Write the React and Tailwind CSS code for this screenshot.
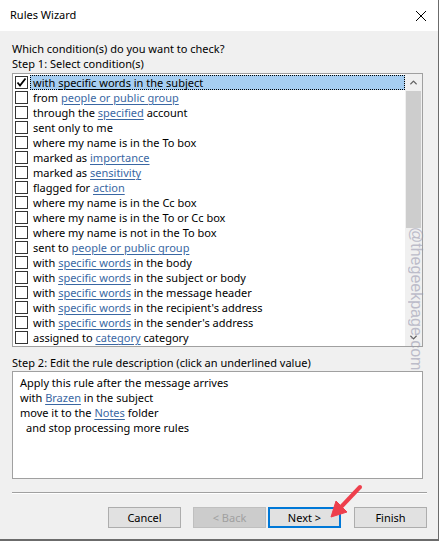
import { ChevronUp, ChevronDown } from 'lucide-react';

const conditions = [
  ['with ', { link: 'specific words' }, ' in the subject'],
  ['from ', { link: 'people or public group' }],
  ['through the ', { link: 'specified' }, ' account'],
  ['sent only to me'],
  ['where my name is in the To box'],
  ['marked as ', { link: 'importance' }],
  ['marked as ', { link: 'sensitivity' }],
  ['flagged for ', { link: 'action' }],
  ['where my name is in the Cc box'],
  ['where my name is in the To or Cc box'],
  ['where my name is not in the To box'],
  ['sent to ', { link: 'people or public group' }],
  ['with ', { link: 'specific words' }, ' in the body'],
  ['with ', { link: 'specific words' }, ' in the subject or body'],
  ['with ', { link: 'specific words' }, ' in the message header'],
  ['with ', { link: 'specific words' }, " in the recipient's address"],
  ['with ', { link: 'specific words' }, " in the sender's address"],
  ['assigned to ', { link: 'category' }, ' category'],
];

const Link = ({ children, dark }) => (
  <span className={`underline underline-offset-2 ${dark ? 'text-black' : 'text-[#3a67a3]'}`}>{children}</span>
);

const Checkbox = ({ checked }) => (
  <div className="w-[13px] h-[13px] shrink-0 border border-[#333] bg-white flex items-center justify-center">
    {checked && (
      <svg width="11" height="11" viewBox="0 0 11 11">
        <path d="M1.5 5.5 L4 8.5 L9.5 1.5" fill="none" stroke="#000" strokeWidth="1.8" />
      </svg>
    )}
  </div>
);

const Button = ({ children, disabled, focused, className = '' }) => (
  <button
    className={`h-[21px] flex items-center justify-center text-[11px] ${
      disabled
        ? 'bg-[#cccccc] border border-[#bfbfbf] text-[#a0a0a0]'
        : focused
        ? 'bg-[#e1e1e1] border-2 border-[#0078d7] text-black'
        : 'bg-[#e1e1e1] border border-[#adadad] text-black'
    } ${className}`}
  >
    {children}
  </button>
);

export default function App() {
  return (
    <div className="relative w-[439px] h-[541px] flex flex-col bg-[#f0f0f0] border-r border-b-2 border-[#6b6b6b] font-['Noto_Sans',sans-serif] text-black overflow-hidden">
      {/* title bar */}
      <div className="h-[31px] shrink-0 bg-white flex items-center justify-between pl-[10px] pr-[10px]">
        <span className="text-[11px]">Rules Wizard</span>
        <svg width="12" height="12" viewBox="0 0 12 12" className="mr-[1px]">
          <path d="M1 1 L11 11 M11 1 L1 11" stroke="#000" strokeWidth="1" />
        </svg>
      </div>

      <div className="flex flex-col px-[12px] pt-[10px] text-[11px] leading-[15px]">
        <div>Which condition(s) do you want to check?</div>
        <div>Step 1: Select condition(s)</div>

        {/* conditions list */}
        <div className="mt-[2px] w-[411px] h-[274px] border border-[#a0a0a0] bg-white flex">
          <div className="flex-1 flex flex-col pt-[1px]">
            {conditions.map((parts, i) => (
              <div key={i} className="h-[15px] flex items-center pl-[2px]">
                <Checkbox checked={i === 0} />
                <div
                  className={`ml-[2px] h-[15px] flex items-center pl-[2px] whitespace-pre ${
                    i === 0 ? 'flex-1 bg-[#a6cef1] border border-dotted border-black' : 'border border-transparent'
                  }`}
                >
                  {parts.map((p, j) =>
                    typeof p === 'string' ? <span key={j}>{p}</span> : <Link key={j} dark={i === 0}>{p.link}</Link>
                  )}
                </div>
              </div>
            ))}
          </div>
          <div className="w-[17px] flex flex-col items-center bg-[#f0f0f0]">
            <div className="h-[17px] flex items-center justify-center text-[#606060]">
              <ChevronUp size={11} strokeWidth={3} />
            </div>
            <div className="w-[15px] h-[137px] bg-[#cdcdcd]" />
            <div className="flex-1" />
            <div className="h-[17px] flex items-center justify-center text-[#606060]">
              <ChevronDown size={11} strokeWidth={3} />
            </div>
          </div>
        </div>

        <div className="mt-[8px]">Step 2: Edit the rule description (click an underlined value)</div>

        {/* description */}
        <div className="mt-[1px] w-[411px] h-[108px] border border-[#a0a0a0] bg-white px-[7px] pt-[3px]">
          <div>Apply this rule after the message arrives</div>
          <div>
            with <Link>Brazen</Link> in the subject
          </div>
          <div>
            move it to the <Link>Notes</Link> folder
          </div>
          <div className="pl-[6px]">and stop processing more rules</div>
        </div>

        <div className="mt-[13px] w-[415px] h-[2px] border-t border-[#a0a0a0] border-b border-b-white" />

        <div className="mt-[13px] w-[415px] flex justify-end">
          <Button className="w-[73px]">Cancel</Button>
          <Button className="w-[73px] ml-[12px]" disabled>
            &lt; Back
          </Button>
          <Button className="w-[73px] ml-[2px]" focused>
            Next &gt;
          </Button>
          <Button className="w-[73px] ml-[13px]">Finish</Button>
        </div>
      </div>

      {/* watermark */}
      <div className="absolute left-[407px] top-[227px] [writing-mode:vertical-rl] text-[16px] leading-[18px] text-[#9a9ab0] opacity-60 font-['Liberation_Sans',sans-serif]">
        @thegeekpage.com
      </div>

      {/* red arrow */}
      <svg className="absolute left-0 top-0" width="439" height="541" viewBox="0 0 439 541">
        <g fill="#ee3f4c" stroke="#ee3f4c">
          <path d="M360 487 L342 506" strokeWidth="4" strokeLinecap="round" fill="none" />
          <path d="M331 517 L336 501 L347 512 Z" strokeWidth="1" strokeLinejoin="round" />
        </g>
      </svg>
    </div>
  );
}
